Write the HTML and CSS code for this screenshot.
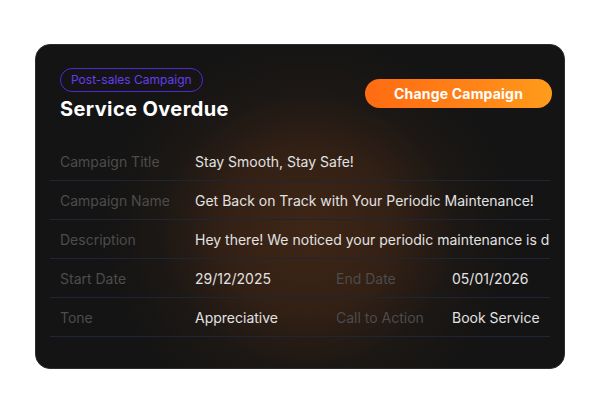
FILE: index.html
```html
<!DOCTYPE html>
<html>
<head>
<meta charset="utf-8">
<link rel="stylesheet" href="styles.css">
</head>
<body>
<div class="card">
  <div class="header">
    <div class="heading">
      <span class="pill">Post-sales Campaign</span>
      <h1 class="title">Service Overdue</h1>
    </div>
    <button class="cta">Change Campaign</button>
  </div>
  <div class="table">
    <div class="row">
      <div class="label">Campaign Title</div>
      <div class="value wide">Stay Smooth, Stay Safe!</div>
    </div>
    <div class="row">
      <div class="label">Campaign Name</div>
      <div class="value wide">Get Back on Track with Your Periodic Maintenance!</div>
    </div>
    <div class="row">
      <div class="label">Description</div>
      <div class="value wide">Hey there! We noticed your periodic maintenance is due. Book your service today!</div>
    </div>
    <div class="row">
      <div class="label">Start Date</div>
      <div class="value">29/12/2025</div>
      <div class="label">End Date</div>
      <div class="value">05/01/2026</div>
    </div>
    <div class="row">
      <div class="label">Tone</div>
      <div class="value">Appreciative</div>
      <div class="label">Call to Action</div>
      <div class="value">Book Service</div>
    </div>
  </div>
</div>
</body>
</html>
```
FILE: styles.css
```css
* { box-sizing: border-box; }
html, body { margin: 0; padding: 0; background: #ffffff; }
body { font-family: Inter, "Noto Sans", sans-serif; }

.card {
  margin: 44px 0 0 35px;
  width: 530px;
  height: 325px;
  border-radius: 15px;
  border: 1px solid #2c2c2c;
  padding: 0 14px;
  background:
    radial-gradient(ellipse 210px 195px at 272px 185px, rgba(62, 38, 22, 1) 0%, rgba(55, 34, 21, 0.9) 40%, rgba(36, 27, 21, 0.45) 72%, rgba(20, 20, 20, 0) 100%),
    #141414;
  overflow: hidden;
}

.header {
  display: flex;
  align-items: flex-start;
  justify-content: space-between;
  padding: 23px 0 0 10px;
  height: 97px;
}
.heading { display: flex; flex-direction: column; align-items: flex-start; }
.pill {
  display: inline-block;
  height: 24px;
  line-height: 22px;
  padding: 0 10px;
  border: 1px solid #5327d6;
  border-radius: 12px;
  color: #6a3cf0;
  font-size: 12px;
}
.title {
  margin: 4px 0 0;
  font-size: 20px;
  line-height: 26px;
  font-weight: 700;
  color: #ffffff;
  letter-spacing: 0.4px;
}
.cta {
  width: 187px;
  height: 29px;
  margin-right: -2px;
  margin-top: 11px;
  border: none;
  border-radius: 15px;
  background: linear-gradient(90deg, #ff6b12 0%, #ff8418 60%, #ff9c1b 100%);
  color: #ffffff;
  font-family: Inter, sans-serif;
  font-size: 14px;
  font-weight: 700;
  letter-spacing: 0.2px;
}

.row {
  display: grid;
  grid-template-columns: 135px 141px 116px 1fr;
  align-items: center;
  height: 39px;
  border-bottom: 1px solid #1e2533;
}
.label, .value {
  padding-left: 10px;
  font-size: 14px;
  white-space: nowrap;
  overflow: hidden;
}
.label { color: #4c4c4c; }
.value { color: #e2e2e2; }
.value.wide { grid-column: 2 / 5; }
```
